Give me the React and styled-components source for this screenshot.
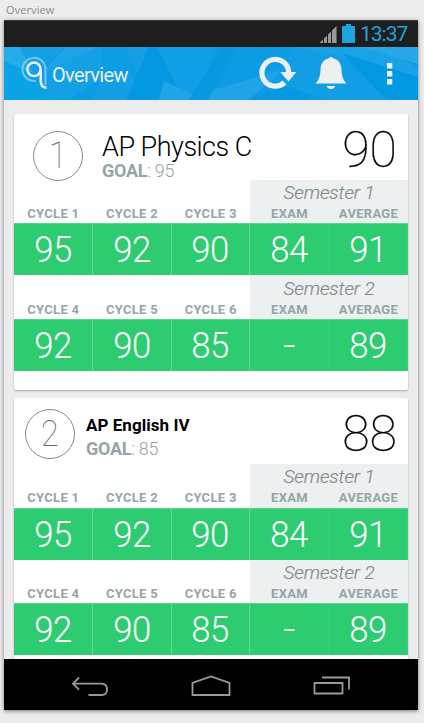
import React from "react";
import styled, { createGlobalStyle } from "styled-components";

const Global = createGlobalStyle`
  * { box-sizing: border-box; }
  html, body { margin: 0; padding: 0; background: #ececec; overflow: hidden; }
  body { font-family: Roboto, "Liberation Sans", sans-serif; }
`;

const Page = styled.div`
  width: 424px;
  height: 723px;
  overflow: hidden;
  background: #ececec;
  display: flex;
  flex-direction: column;
`;

const Caption = styled.div`
  height: 20px;
  padding: 2px 0 0 6px;
  font: 400 11px/16px "Open Sans", sans-serif;
  letter-spacing: 0.1px;
  color: #8b8b8b;
`;

const Phone = styled.div`
  width: 414px;
  height: 690px;
  margin-left: 4px;
  display: flex;
  flex-direction: column;
  background: #ececec;
  box-shadow: 0 1px 4px rgba(0, 0, 0, 0.5);
`;

const StatusBar = styled.div`
  height: 27px;
  flex: none;
  background: #1e1e1e;
  border-top: 1px solid #3d4040;
  display: flex;
  justify-content: flex-end;
  align-items: flex-start;
  padding-right: 10px;
`;

const StatusIcons = styled.svg`
  width: 38px;
  height: 26px;
  margin-right: 4px;
`;

const Clock = styled.div`
  font-size: 21px;
  line-height: 27px;
  font-weight: 400;
  color: #1ba5dc;
  width: 48px;
  white-space: nowrap;
  letter-spacing: -1px;
`;

const AppBar = styled.header`
  height: 53px;
  flex: none;
  display: grid;
`;

const BarArt = styled.svg`
  grid-area: 1 / 1;
  width: 414px;
  height: 53px;
`;

const BarContent = styled.div`
  grid-area: 1 / 1;
  display: flex;
  align-items: center;
  height: 53px;
  z-index: 1;
`;

const Logo = styled.svg`
  width: 30px;
  height: 53px;
  margin-left: 16px;
`;

const BarTitle = styled.h1`
  margin: 3px 0 0 2px;
  font-size: 20px;
  line-height: 24px;
  font-weight: 400;
  letter-spacing: -0.65px;
  color: #ecf0f1;
  flex: 1;
`;

const Actions = styled.svg`
  width: 174px;
  height: 53px;
`;

const Content = styled.main`
  height: 559px;
  flex: none;
  overflow: hidden;
  padding: 14px 10px 0;
  display: flex;
  flex-direction: column;
  gap: 8px;
`;

const CardBox = styled.section`
  height: 276px;
  flex: none;
  background: #fff;
  border-radius: 2px;
  box-shadow: 0 1px 2px rgba(0, 0, 0, 0.3);
`;

const CardHead = styled.div`
  height: 66px;
  display: flex;
  align-items: flex-start;
  padding-left: ${(p) => (p.$large ? 19 : 11)}px;
  padding-right: 11px;
`;

const Numeral = styled.span`
  display: inline-block;
  transform: scaleX(${(p) => p.$x});
`;

const Rank = styled.div`
  width: 50px;
  height: 50px;
  flex: none;
  margin-top: ${(p) => (p.$large ? 17 : 11)}px;
  border: 1px solid #7f8c8d;
  border-radius: 50%;
  text-align: center;
  font-size: 36px;
  line-height: 48px;
  font-weight: 100;
  color: #5f6c6d;
`;

const Info = styled.div`
  flex: 1;
  padding-left: ${(p) => (p.$large ? 19 : 11)}px;
  padding-top: ${(p) => (p.$large ? 19 : 13)}px;
`;

const CourseName = styled.div`
  font-size: ${(p) => (p.$large ? 27 : 17)}px;
  font-weight: ${(p) => (p.$large ? 300 : 700)};
  line-height: 28px;
  letter-spacing: ${(p) => (p.$large ? -0.5 : 0.05)}px;
  color: #000;
  white-space: nowrap;
`;

const Goal = styled.div`
  font-size: 18px;
  line-height: 20px;
  font-weight: 300;
  letter-spacing: -0.3px;
  color: #95a5a6;
  white-space: nowrap;
  b { font-weight: 700; }
`;

const Total = styled.div`
  font-size: 50px;
  line-height: 58px;
  margin-top: 7px;
  font-weight: 100;
  -webkit-text-stroke: 0.3px #000;
  letter-spacing: 0;
  color: #000;
`;

const Band = styled.div`
  height: ${(p) => p.$h}px;
  display: grid;
  grid-template-columns: 236px 158px;
`;

const CycleLabels = styled.div`
  display: grid;
  grid-template-columns: repeat(3, 1fr);
  align-items: end;
  padding-bottom: ${(p) => p.$pad}px;
`;

const SemesterPanel = styled.div`
  background: #ecf0f1;
  display: flex;
  flex-direction: column;
  justify-content: flex-end;
  padding-bottom: ${(p) => p.$pad}px;
`;

const SemesterName = styled.div`
  text-align: center;
  font-size: 19px;
  line-height: 22px;
  margin-bottom: 1px;
  font-style: italic;
  font-weight: 300;
  -webkit-text-stroke: 0.2px #7f8c8d;
  color: #7f8c8d;
  letter-spacing: -0.1px;
`;

const SemesterLabels = styled.div`
  display: grid;
  grid-template-columns: repeat(2, 1fr);
`;

const Label = styled.div`
  text-align: center;
  font-size: 13px;
  line-height: 17px;
  font-weight: 700;
  letter-spacing: 0.3px;
  color: #95a5a6;
`;

const Scores = styled.div`
  height: 52px;
  display: grid;
  grid-template-columns: repeat(5, 1fr);
  background: #2ecc71;
  border-top: 1px solid #58d68d;
`;

const Score = styled.div`
  text-align: center;
  font-size: 37px;
  line-height: 51px;
  font-weight: 300;
  color: #fff;
  border-right: 1px solid ${(p) => (p.$faint ? "#3bce7a" : "#62d994")};
  letter-spacing: -0.4px;
`;

const NavBar = styled.svg`
  width: 414px;
  height: 51px;
  flex: none;
  background: #000;
`;

const courses = [
  { rank: 1, name: "AP Physics C", goal: 95, total: 90, large: true, first: 43 },
  { rank: 2, name: "AP English IV", goal: 85, total: 88, large: false, first: 44 },
];

const semesters = [
  { n: 1, cycles: [1, 2, 3], scores: ["95", "92", "90", "84", "91"] },
  { n: 2, cycles: [4, 5, 6], scores: ["92", "90", "85", "-", "89"] },
];

function Semester({ data, height, pad }) {
  return (
    <>
      <Band $h={height}>
        <CycleLabels $pad={pad}>
          {data.cycles.map((c) => <Label key={c}>CYCLE {c}</Label>)}
        </CycleLabels>
        <SemesterPanel $pad={pad}>
          <SemesterName>Semester {data.n}</SemesterName>
          <SemesterLabels>
            <Label>EXAM</Label>
            <Label>AVERAGE</Label>
          </SemesterLabels>
        </SemesterPanel>
      </Band>
      <Scores>
        {data.scores.map((s, i) => (
          <Score key={i} $faint={i > 2}>
            <Numeral $x={s === "-" ? 1.15 : 0.94}>{s}</Numeral>
          </Score>
        ))}
      </Scores>
    </>
  );
}

function Card({ course }) {
  const { large } = course;
  return (
    <CardBox>
      <CardHead $large={large}>
        <Rank $large={large}><Numeral $x={0.9}>{course.rank}</Numeral></Rank>
        <Info $large={large}>
          <CourseName $large={large}>{course.name}</CourseName>
          <Goal><b>GOAL</b>: {course.goal}</Goal>
        </Info>
        <Total>{course.total}</Total>
      </CardHead>
      <Semester data={semesters[0]} height={course.first} pad={large ? 1 : 2} />
      <Semester data={semesters[1]} height={87 - course.first} pad={1} />
    </CardBox>
  );
}

export default function App() {
  return (
    <Page>
      <Global />
      <Caption>Overview</Caption>
      <Phone>
        <StatusBar>
          <StatusIcons viewBox="0 0 38 26">
            <path d="M1.500 22 5 18.500V22ZM6 17.500 9 14.500V22H6ZM10 13.500 13 10.500V22H10ZM14 9.500 18.500 5V22H14Z" fill="#999" />
            <path d="M24 5H28V3H33V5H37V22H24Z" fill="#1ba5dc" />
          </StatusIcons>
          <Clock>13:37</Clock>
        </StatusBar>
        <AppBar>
          <BarArt viewBox="0 0 414 53">
            <rect width="414" height="53" fill="#0c9ce4" />
            <path d="M0 0H16L30 27 0 20Z" fill="#25adea" />
            <path d="M0 14 43 32 65 53H0Z" fill="#08a4e5" />
            <path d="M16 0H62L31 28Z" fill="#159fe5" />
            <path d="M62 0H95L31 32Z" fill="#1fa3e7" />
            <path d="M31 28 97 0 98 30 65 53H50Z" fill="#14a0e5" />
            <path d="M97 0H122L149 20 98 50Z" fill="#0d9de4" />
            <path d="M98 30 137 31 122 53H88Z" fill="#149fe5" />
            <path d="M122 0H145L137 31Z" fill="#179fe6" />
            <path d="M145 0H153L180 53H122Z" fill="#0398e1" />
            <path d="M153 0H208V53H180Z" fill="#109ee5" />
            <path d="M155 53 160 34 201 53Z" fill="#20a4e7" />
            <path d="M217 0H233L204 53H185Z" fill="#0699e2" />
            <path d="M209 43 284 21 244 53H204Z" fill="#20a4e7" />
            <path d="M244 53 338 15 302 53Z" fill="#0599e1" />
            <path d="M268 35 291 0H358L323 53Z" fill="#129ee5" />
            <path d="M291 0H373L414 20V30L338 10Z" fill="#1aa2e7" />
            <path d="M338 6 414 30V53H383Z" fill="#0299e2" />
            <path d="M358 0H414V17Z" fill="#27a7e8" />
            <path d="M323 53 338 10 383 53Z" fill="#129ee5" />
          </BarArt>
          <BarContent>
            <Logo viewBox="0 0 30 53" fill="none">
              <path d="M16 33.700A11.500 11.500 0 1 1 25.500 22.500V38" stroke="#72c7ef" strokeWidth="2" />
              <circle cx="14" cy="22.300" r="6.700" stroke="#ecf0f1" strokeWidth="2.500" />
              <path d="M20.700 22.500V34Q20.700 40.400 26.500 40.700" stroke="#ecf0f1" strokeWidth="2.500" />
            </Logo>
            <BarTitle>Overview</BarTitle>
            <Actions viewBox="0 0 174 53">
              <path d="M40.500 35.500A13.400 13.400 0 1 1 44.700 26" fill="none" stroke="#ecf0f1" strokeWidth="5.200" />
              <path d="M36.300 25H52.300L44.500 34.500Z" fill="#ecf0f1" />
              <path d="M71.500 36.500Q76 32.500 76.500 23.500C76.500 16.500 79.500 12.500 84.500 11.500Q85 10 87 10Q89 10 89.500 11.500C94.500 12.500 97.500 16.500 97.500 23.500Q98 32.500 102.500 36.500ZM82.800 39H91.200Q90.500 42 87 42T82.800 39Z" fill="#ecf0f1" />
              <path d="M143 16H148.300V21.500H143ZM143 24H148.300V29.500H143ZM143 32H148.300V37.500H143Z" fill="#ecf0f1" />
            </Actions>
          </BarContent>
        </AppBar>
        <Content>
          {courses.map((c) => <Card key={c.rank} course={c} />)}
        </Content>
        <NavBar viewBox="0 0 414 51" fill="none" stroke="#999" strokeWidth="1.800">
          <path d="M75 18.500 69 24.700 75 30.700M69 24.700H97.500Q103 25 103 30.500T97.500 36H84.500" />
          <path d="M188.500 36V24L207 17.500 225.500 24V36Z" />
          <path d="M310.500 24H338.500V34.500H310.500ZM318 18.500H345V30.500" />
        </NavBar>
      </Phone>
    </Page>
  );
}
